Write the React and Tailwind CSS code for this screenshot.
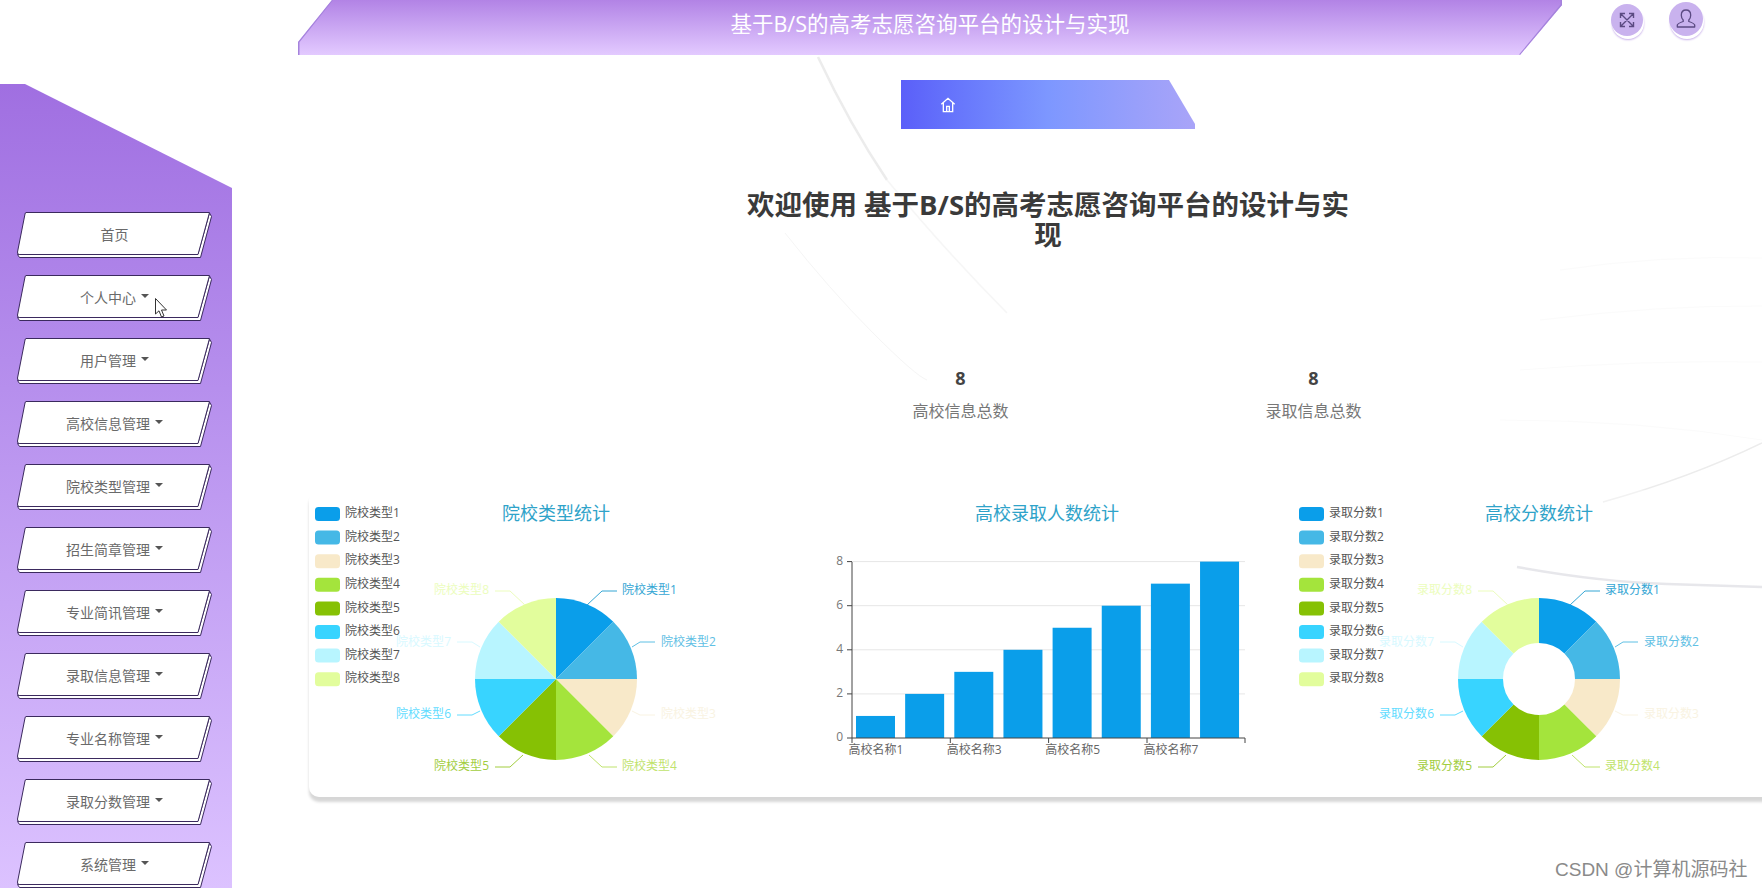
import React from 'react';

const menus = [
    { name: '首页' },
    { name: '个人中心', caret: true },
    { name: '用户管理', caret: true },
    { name: '高校信息管理', caret: true },
    { name: '院校类型管理', caret: true },
    { name: '招生简章管理', caret: true },
    { name: '专业简讯管理', caret: true },
    { name: '录取信息管理', caret: true },
    { name: '专业名称管理', caret: true },
    { name: '录取分数管理', caret: true },
    { name: '系统管理', caret: true },
];

const sliceColors = ['#0a9eea', '#45b8e6', '#f8e9c9', '#a4e43c', '#86c104', '#38d4ff', '#b8f5ff', '#e2fd9c'];
const labelColors = ['#35a6d4', '#5fc0e4', '#f9f3e2', '#bfe36c', '#a2cd3e', '#62dcff', '#d8f9ff', '#ecfdbd'];

// leader line and label offsets from the pie centre
const labelPos = [
    { line: [[31, -74], [46, -88], [61, -88]], x: 66, y: -88, anchor: 'start' },
    { line: [[76, -32], [84, -37], [99, -37]], x: 105, y: -36, anchor: 'start' },
    { line: [[76, 32], [84, 36], [99, 36]], x: 105, y: 36, anchor: 'start' },
    { line: [[33, 76], [46, 88], [61, 88]], x: 66, y: 88, anchor: 'start' },
    { line: [[-33, 76], [-46, 88], [-61, 88]], x: -67, y: 88, anchor: 'end' },
    { line: [[-76, 32], [-84, 36], [-99, 36]], x: -105, y: 36, anchor: 'end' },
    { line: [[-76, -32], [-84, -37], [-99, -37]], x: -105, y: -36, anchor: 'end' },
    { line: [[-31, -74], [-46, -88], [-61, -88]], x: -67, y: -88, anchor: 'end' },
];

const polar = (cx, cy, r, deg) => {
    const a = ((deg - 90) * Math.PI) / 180;
    return [cx + r * Math.cos(a), cy + r * Math.sin(a)];
};

const slicePath = (cx, cy, r, inner, from, to) => {
    const [x1, y1] = polar(cx, cy, r, from);
    const [x2, y2] = polar(cx, cy, r, to);
    if (!inner) return `M${cx} ${cy}L${x1} ${y1}A${r} ${r} 0 0 1 ${x2} ${y2}Z`;
    const [x3, y3] = polar(cx, cy, inner, to);
    const [x4, y4] = polar(cx, cy, inner, from);
    return `M${x1} ${y1}A${r} ${r} 0 0 1 ${x2} ${y2}L${x3} ${y3}A${inner} ${inner} 0 0 0 ${x4} ${y4}Z`;
};

const PieChart = ({ title, prefix, inner = 0, legendX = 6, cx = 247 }) => {
    const cy = 189;
    return (
        <svg viewBox="0 0 491 307" className="w-[491px] h-[307px] shrink-0">
            <text x={cx} y={25} textAnchor="middle" dominantBaseline="middle" fontSize="18" fill="#2fa3c9">{title}</text>
            {sliceColors.map((c, i) => (
                <g key={c}>
                    <rect x={legendX} y={17 + i * 23.6} width="25" height="14" rx="3.5" fill={c} />
                    <text x={legendX + 30} y={24 + i * 23.6} dominantBaseline="middle" fontSize="12" fill="#555">{prefix}{i + 1}</text>
                    <path d={slicePath(cx, cy, 81, inner, i * 45, (i + 1) * 45)} fill={c} />
                    <polyline
                        points={labelPos[i].line.map(([x, y]) => `${cx + x},${cy + y}`).join(' ')}
                        fill="none"
                        stroke={labelColors[i]}
                    />
                    <text
                        x={cx + labelPos[i].x}
                        y={cy + labelPos[i].y}
                        textAnchor={labelPos[i].anchor}
                        dominantBaseline="middle"
                        fontSize="12"
                        fill={labelColors[i]}
                    >
                        {prefix}{i + 1}
                    </text>
                </g>
            ))}
        </svg>
    );
};

const BarChart = () => {
    const y0 = 248;
    const unit = 22.05;
    return (
        <svg viewBox="0 0 491 307" className="w-[491px] h-[307px] shrink-0">
            <text x={247} y={25} textAnchor="middle" dominantBaseline="middle" fontSize="18" fill="#2fa3c9">高校录取人数统计</text>
            {[2, 4, 6, 8].map((v) => (
                <line key={v} x1="52" x2="445" y1={y0 - v * unit} y2={y0 - v * unit} stroke="#e6e6e6" />
            ))}
            {[0, 2, 4, 6, 8].map((v) => (
                <g key={v}>
                    <line x1="47" x2="52" y1={y0 - v * unit} y2={y0 - v * unit} stroke="#444" />
                    <text x="43" y={y0 - v * unit} textAnchor="end" dominantBaseline="middle" fontSize="12" fill="#777">{v}</text>
                </g>
            ))}
            {[1, 2, 3, 4, 5, 6, 7, 8].map((v, i) => (
                <rect key={v} x={56 + i * 49.15} y={y0 - v * unit} width="39" height={v * unit} fill="#0a9eea" />
            ))}
            <path d="M52 72V248H445" fill="none" stroke="#444" />
            {[52, 150.3, 248.6, 347, 445].map((x) => (
                <line key={x} x1={x} x2={x} y1="248" y2="253" stroke="#444" />
            ))}
            {[1, 3, 5, 7].map((v, i) => (
                <text key={v} x={76 + i * 98.3} y="261" textAnchor="middle" dominantBaseline="middle" fontSize="12" fill="#666">高校名称{v}</text>
            ))}
        </svg>
    );
};

const MenuButton = ({ name, caret }) => (
    <div className="relative w-[195px] h-[46px] shrink-0 pb-[2px] flex items-center justify-center gap-[5px] text-[14px] text-[#6a6a6a]">
        <svg viewBox="0 0 195 46" className="absolute inset-0 w-full h-full">
            <path d="M192.5 1L194.5 4.5L183.5 45.5H2.5L0.5 42.5L181 42Z" fill="#fff" stroke="#3b2a5e" strokeLinejoin="round" />
            <path d="M9 0.5H192.5L181 42.5H2.5Q0 42.5 0.5 40L8 2Q8.3 0.5 9 0.5Z" fill="#fff" stroke="#3b2a5e" strokeLinejoin="round" />
        </svg>
        <span className="relative">{name}</span>
        {caret && <span className="relative mb-[3px] w-0 h-0 border-x-[4px] border-x-transparent border-t-[4px] border-t-[#555]" />}
    </div>
);

const App = () => {
    return (
        <div className="relative w-full h-[888px] overflow-hidden bg-white flex font-['Open_Sans','Noto_Sans_CJK_SC',sans-serif]">
            {/* faint background lines */}
            <svg viewBox="0 0 1762 888" className="absolute inset-0 w-[1762px] h-[888px]">
                <path d="M818 57Q850 125 887 180" fill="none" stroke="#ececec" strokeWidth="2.5" />
                <path d="M887 180Q940 245 1007 313" fill="none" stroke="#f6f6f6" strokeWidth="1.5" />
                <path d="M785 233Q830 290 873 333T927 380" fill="none" stroke="#f5f5f5" />
                <path d="M1603 502Q1690 478 1762 443" fill="none" stroke="#ececec" strokeWidth="1.5" />
                <path d="M1517 567Q1600 582 1667 584T1762 587" fill="none" stroke="#dddde3" strokeWidth="2.5" />
                <path d="M1560 270Q1660 255 1762 258M1540 320Q1660 305 1762 306M1520 370Q1640 360 1762 362M1500 420Q1640 420 1762 440" fill="none" stroke="#fbfbfb" />
            </svg>

            <aside className="relative w-[232px] h-[804px] mt-[84px] shrink-0 pt-[128px] pl-[17px] flex flex-col gap-[17px] bg-linear-to-b from-[#a06fe1] to-[#dcc2ff] [clip-path:polygon(0_0,25px_0,100%_104px,100%_100%,0_100%)]">
                {menus.map((m) => (
                    <MenuButton key={m.name} name={m.name} caret={m.caret} />
                ))}
            </aside>

            <main className="relative flex-1 min-w-0 flex flex-col">
                <div className="flex items-start">
                    <header className="relative ml-[66px] w-[1264px] h-[55px] shrink-0 pb-[7px] flex items-center justify-center text-[21.5px] text-white bg-linear-to-b from-[#b283e5] to-[#e3caff] [clip-path:polygon(0_100%,0_42px,34px_0,100%_0,100%_5px,1222px_100%)]">
                        <svg viewBox="0 0 1264 55" className="absolute inset-0 w-full h-full">
                            <path d="M0.500 55V42L34 0M1263.500 0V5L1222 55" fill="none" stroke="#a583dc" strokeWidth="2" />
                        </svg>
                        <span className="relative">基于B/S的高考志愿咨询平台的设计与实现</span>
                    </header>
                    <button className="ml-[49px] mt-[4px] w-[32px] h-[32px] shrink-0 rounded-full bg-[#c9b2ee] flex items-center justify-center shadow-[1px_3px_0_#fff,1px_4px_2px_#c8b0ea]">
                        <svg width="18" height="18" viewBox="0 0 18 18" fill="none" stroke="#5b4a82" strokeWidth="1.4">
                            <path d="M3 3L15 15M15 3L3 15M2.5 7V2.5H7M11 2.5H15.5V7M15.5 11V15.5H11M7 15.5H2.5V11" />
                        </svg>
                    </button>
                    <button className="ml-[26px] mt-[2px] w-[34px] h-[34px] shrink-0 rounded-full bg-[#c9b2ee] flex items-center justify-center shadow-[1px_3px_0_#fff,1px_4px_2px_#c8b0ea]">
                        <svg width="24" height="24" viewBox="0 0 24 24" fill="none" stroke="#5b4a82" strokeWidth="1.3" strokeLinejoin="round">
                            <path d="M12 3C9 3 7.3 5.2 7.3 8.2c0 2 .7 3.6 1.900 4.800v1.500c-2.500.8-5.400 2-5.900 3.500v2h17.400v-2c-.5-1.500-3.400-2.700-5.900-3.500V13c1.200-1.200 1.900-2.800 1.900-4.800C16.700 5.200 15 3 12 3z" />
                        </svg>
                    </button>
                </div>

                <div className="relative ml-[669px] mt-[25px] w-[294px] h-[49px] shrink-0 pl-[39px] flex items-center bg-linear-to-r from-[#5b5ff9] via-[#7d97ff] to-[#a9a4f8] [clip-path:polygon(0_0,268px_0,100%_44px,100%_100%,0_100%)]">
                    <svg width="16" height="16" viewBox="0 0 24 24" fill="none" stroke="#fff" strokeWidth="2">
                        <path d="M2 11L12 2L22 11M5 9V22H19V9M10 22V14H14V22" />
                    </svg>
                </div>

                <h1 className="relative ml-[506px] mt-[61px] w-[620px] text-center text-[27.5px] leading-[30px] font-bold text-[#3a3a3a]">
                    欢迎使用 基于B/S的高考志愿咨询平台的设计与实现
                </h1>

                <div className="relative ml-[552px] mt-[114px] flex">
                    {[['8', '高校信息总数'], ['8', '录取信息总数']].map(([n, label]) => (
                        <div key={label} className="w-[353px] flex flex-col items-center">
                            <div className="text-[18px] leading-[28px] font-bold text-[#444]">{n}</div>
                            <div className="mt-[7px] text-[16px] leading-[24px] text-[#777]">{label}</div>
                        </div>
                    ))}
                </div>

                <section className="relative ml-[77px] mt-[67px] w-[1520px] h-[307px] shrink-0 flex rounded-[10px] bg-white/30 shadow-[0_5px_3px_rgba(0,0,0,0.16)]">
                    <PieChart title="院校类型统计" prefix="院校类型" legendX={6} />
                    <BarChart />
                    <PieChart title="高校分数统计" prefix="录取分数" inner={36} legendX={8} cx={248} />
                </section>
            </main>

            {/* mouse pointer */}
            <svg width="13" height="21" viewBox="0 0 13 21" className="absolute left-[155px] top-[298px]">
                <path d="M0.5 0.5V16L4 12.8L6.5 19L9 18L6.500 12H11.500Z" fill="#fff" stroke="#333" />
            </svg>

            <div className="absolute left-[1555px] top-[858px] text-[19px] leading-[24px] text-[#8a8a8a] font-['Liberation_Sans','Noto_Sans_CJK_SC',sans-serif] whitespace-nowrap">
                CSDN @计算机源码社
            </div>
        </div>
    );
};

export default App;
